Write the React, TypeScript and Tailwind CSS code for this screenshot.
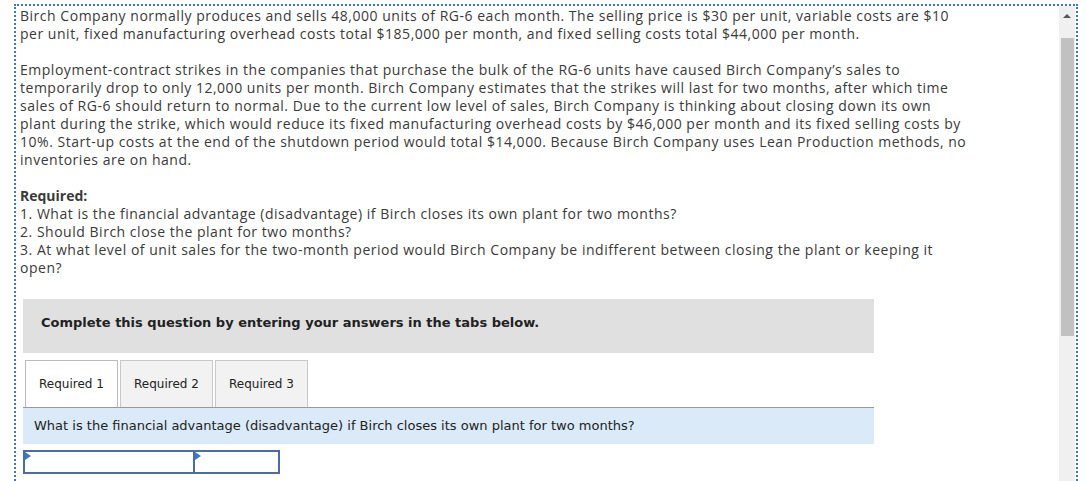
import React from 'react';

const para1 = [
  'Birch Company normally produces and sells 48,000 units of RG-6 each month. The selling price is $30 per unit, variable costs are $10',
  'per unit, fixed manufacturing overhead costs total $185,000 per month, and fixed selling costs total $44,000 per month.',
];

const para2 = [
  'Employment-contract strikes in the companies that purchase the bulk of the RG-6 units have caused Birch Company\u2019s sales to',
  'temporarily drop to only 12,000 units per month. Birch Company estimates that the strikes will last for two months, after which time',
  'sales of RG-6 should return to normal. Due to the current low level of sales, Birch Company is thinking about closing down its own',
  'plant during the strike, which would reduce its fixed manufacturing overhead costs by $46,000 per month and its fixed selling costs by',
  '10%. Start-up costs at the end of the shutdown period would total $14,000. Because Birch Company uses Lean Production methods, no',
  'inventories are on hand.',
];

const questions = [
  '1. What is the financial advantage (disadvantage) if Birch closes its own plant for two months?',
  '2. Should Birch close the plant for two months?',
  '3. At what level of unit sales for the two-month period would Birch Company be indifferent between closing the plant or keeping it',
  'open?',
];

const Lines = ({ lines }: { lines: string[] }) => (
  <div>
    {lines.map((l, i) => (
      <div key={i} className="whitespace-nowrap">
        {l}
      </div>
    ))}
  </div>
);

const tabs = ['Required 1', 'Required 2', 'Required 3'];

export default function App() {
  return (
    <div className="w-[1087px] h-[481px] overflow-hidden bg-white pt-[4px] pl-[14px]">
      <div className="w-[1064px] h-[520px] border-2 border-dotted border-[#3b78c8] flex">
        {/* content */}
        <div className="flex-1 flex flex-col">
          <div
            className="pl-[4px] pt-[1px] text-[14px] leading-[18px] text-[#3a3a3a] tracking-[0.52px]"
            style={{ fontFamily: '"Open Sans", "Lato", sans-serif' }}
          >
            <Lines lines={para1} />
            <div className="h-[18px]" />
            <Lines lines={para2} />
            <div className="h-[18px]" />
            <div className="font-bold tracking-normal">Required:</div>
            <Lines lines={questions} />
          </div>

          <div
            className="ml-[7px] w-[851px] mt-[22px]"
            style={{ fontFamily: 'Verdana, "DejaVu Sans", sans-serif' }}
          >
            {/* instructions */}
            <div className="h-[54px] bg-[#e0e0e0] flex items-center pl-[18px] pb-[7px] text-[13px] font-bold text-[#222]">
              Complete this question by entering your answers in the tabs below.
            </div>

            {/* tabs */}
            <div className="mt-[7px] flex gap-[2px] pl-[2px] border-b border-[#999]">
              {tabs.map((t, i) => (
                <div
                  key={t}
                  className={
                    i === 0
                      ? 'w-[93px] h-[47px] -mb-px flex items-center justify-center border border-b-0 border-[#bbb] bg-white text-[12px] text-[#222]'
                      : 'w-[93px] h-[47px] flex items-center justify-center border border-b-0 border-[#c8c8c8] bg-[#f2f2f2] text-[12px] text-[#222]'
                  }
                >
                  {t}
                </div>
              ))}
            </div>

            {/* prompt */}
            <div className="h-[36px] bg-[#daeaf8] flex items-center pl-[11px] text-[13px] text-[#222]">
              What is the financial advantage (disadvantage) if Birch closes its own plant for two months?
            </div>

            {/* inputs */}
            <div className="mt-[6px] flex">
              <div className="relative w-[172px] h-[24px] border-2 border-[#4a6ea3] bg-white">
                <span className="absolute left-0 top-0 w-0 h-0 border-t-[4px] border-b-[4px] border-l-[6px] border-t-transparent border-b-transparent border-l-[#3b78c8]" />
              </div>
              <div className="relative w-[85px] h-[24px] border-2 border-l-0 border-[#4a6ea3] bg-white">
                <span className="absolute left-0 top-0 w-0 h-0 border-t-[4px] border-b-[4px] border-l-[6px] border-t-transparent border-b-transparent border-l-[#3b78c8]" />
              </div>
            </div>
          </div>
        </div>

        {/* scrollbar */}
        <div className="w-[16px] bg-[#f0f0f0] flex flex-col items-center mr-[1px]">
          <div className="h-[17px] w-full flex items-center justify-center pt-[2px]">
            <span className="w-0 h-0 border-l-[4px] border-r-[4px] border-b-[4px] border-l-transparent border-r-transparent border-b-[#555]" />
          </div>
          <div className="mt-[15px] w-[13px] h-[298px] bg-[#c1c1c1]" />
        </div>
      </div>
    </div>
  );
}
